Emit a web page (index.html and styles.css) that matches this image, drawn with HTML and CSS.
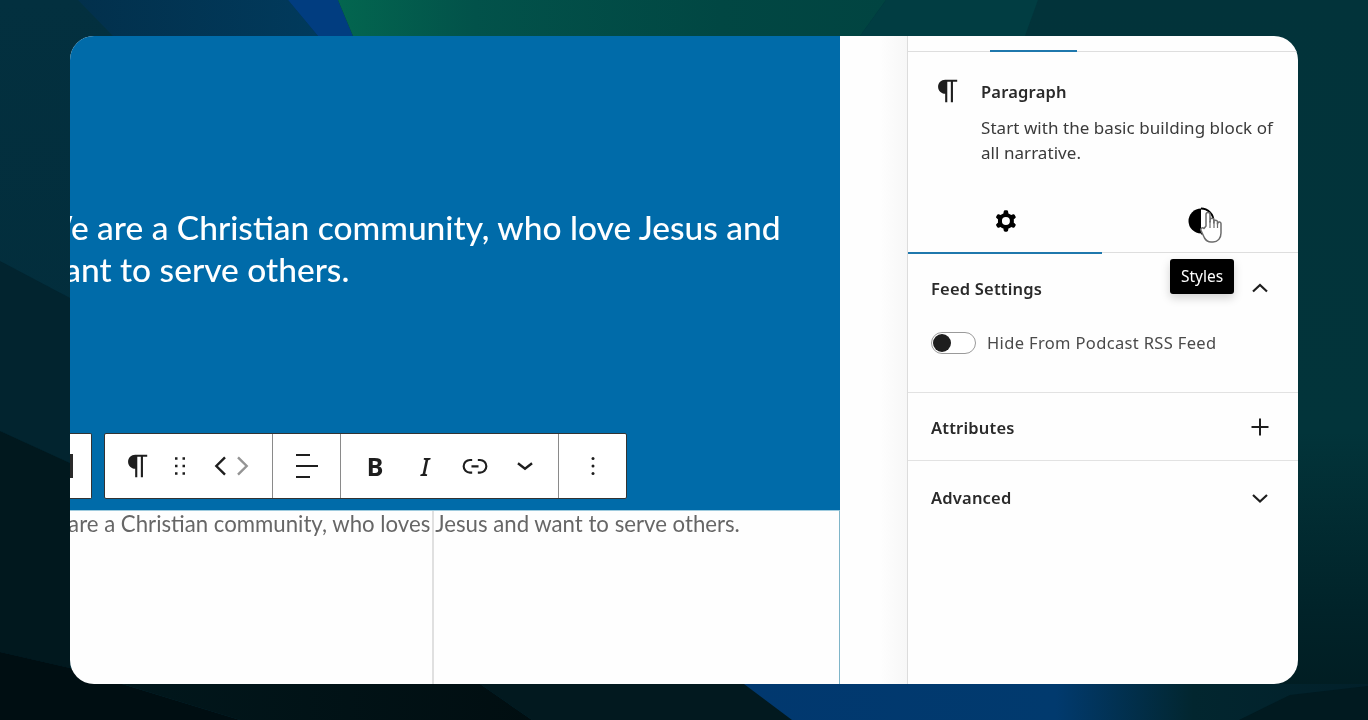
FILE: index.html
```html
<!DOCTYPE html>
<html lang="en">
<head>
<meta charset="utf-8">
<title>Paragraph block settings</title>
<link rel="stylesheet" href="styles.css">
</head>
<body>
<svg class="backdrop" viewBox="0 0 1368 720" preserveAspectRatio="none" aria-hidden="true">
  <defs>
    <linearGradient id="base" x1="0" y1="0" x2="0" y2="1">
      <stop offset="0" stop-color="#03303f"/><stop offset="1" stop-color="#022b39"/>
    </linearGradient>
    <linearGradient id="right" x1="0" y1="0" x2="0" y2="1">
      <stop offset="0" stop-color="#02333a"/><stop offset=".6" stop-color="#02343a"/><stop offset=".85" stop-color="#012329"/><stop offset="1" stop-color="#011b20"/>
    </linearGradient>
    <linearGradient id="green" x1="0" y1="0" x2="1" y2="0">
      <stop offset="0" stop-color="#03664f"/><stop offset=".25" stop-color="#02524a"/><stop offset=".7" stop-color="#014743"/><stop offset="1" stop-color="#014441"/>
    </linearGradient>
    <linearGradient id="navy" x1="0" y1="0" x2="1" y2="0">
      <stop offset="0" stop-color="#02304c"/><stop offset="1" stop-color="#013a5c"/>
    </linearGradient>
    <linearGradient id="deep" x1="0" y1="0" x2="1" y2="0">
      <stop offset="0" stop-color="#01386f"/><stop offset=".5" stop-color="#013a6e"/><stop offset=".72" stop-color="#02262f"/><stop offset="1" stop-color="#02202a"/>
    </linearGradient>
    <linearGradient id="dusk" x1="0" y1="0" x2="1" y2="0">
      <stop offset="0" stop-color="#01171c"/><stop offset="1" stop-color="#010e11"/>
    </linearGradient>
  </defs>
  <rect width="1368" height="720" fill="url(#base)"/>
  <rect x="684" width="684" height="720" fill="url(#right)"/>
  <polygon points="78,0 288,0 318,36 113,36" fill="url(#navy)"/>
  <polygon points="288,0 338,0 353,36 318,36" fill="#013d80"/>
  <polygon points="338,0 886,0 860,36 353,36" fill="url(#green)"/>
  <polygon points="886,0 1038,0 1025,36 860,36" fill="#013d42"/>
  <polygon points="0,261 70,298 70,463 0,431" fill="#02242f"/>
  <polygon points="0,431 70,463 70,668 0,652" fill="#01181e"/>
  <polygon points="0,652 70,668 122,684 240,720 0,720" fill="#000e12"/>
  <polygon points="122,684 480,684 532,720 240,720" fill="url(#dusk)"/>
  <polygon points="480,684 744,684 792,720 532,720" fill="#02191f"/>
  <polygon points="744,684 1368,684 1368,720 792,720" fill="url(#deep)"/>
  <polygon points="1239,720 1290,695 1368,686 1368,720" fill="#011a20"/>
</svg>

<main class="window">
  <section class="canvas">
    <div class="hero">
      <p class="hero-text">We are a Christian community, who love Jesus and want to serve others.</p>
      <div class="toolbars">
        <div class="toolbar toolbar-cut"><span class="cut-icon"></span></div>
        <div class="toolbar">
          <div class="group group-block">
            <button class="tool tool-wide"><svg viewBox="0 0 24 24" class="icon icon-xl"><path d="m9.99609 14v-.2251l.00391.0001v6.225h1.5v-14.5h2.5v14.5h1.5v-14.5h3v-1.5h-8.50391c-2.76142 0-5 2.23858-5 5 0 2.7614 2.23858 5 5 5z"/></svg></button>
            <button class="tool tool-drag"><svg viewBox="0 0 24 24" class="icon icon-drag"><path d="M8 7h2V5H8v2zm0 6h2v-2H8v2zm0 6h2v-2H8v2zm6-14v2h2V5h-2zm0 8h2v-2h-2v2zm0 6h2v-2h-2v2z"/></svg></button>
            <button class="tool tool-move"><svg viewBox="0 0 24 24" class="icon icon-move"><path d="M15 5.500 8.500 12l6.500 6.500" class="line line-move"/></svg></button>
            <button class="tool tool-move tool-off"><svg viewBox="0 0 24 24" class="icon icon-move"><path d="M9 5.500 15.500 12 9 18.500" class="line line-move"/></svg></button>
          </div>
          <div class="group group-align">
            <button class="tool tool-wide"><svg viewBox="0 0 24 24" class="icon"><path d="M1 0h14v2H1zM1 11h22v2H1zM1 22h14v2H1z"/></svg></button>
          </div>
          <div class="group group-format">
            <button class="tool tool-wide tool-letter tool-bold">B</button>
            <button class="tool tool-wide tool-letter tool-italic">I</button>
            <button class="tool tool-wide"><svg viewBox="0 0 24 24" class="icon icon-xl"><path d="M10 17.389H8.444A5.194 5.194 0 1 1 8.444 7H10v1.500H8.444a3.694 3.694 0 0 0 0 7.389H10v1.500ZM14 7h1.556a5.194 5.194 0 0 1 0 10.390H14v-1.500h1.556a3.694 3.694 0 0 0 0-7.390H14V7Zm-4.500 6h5v-1.500h-5V13Z"/></svg></button>
            <button class="tool tool-wide"><svg viewBox="0 0 24 24" class="icon icon-chev"><path d="M5.500 9.500 12 14.500l6.500-5" class="line"/></svg></button>
          </div>
          <div class="group group-more">
            <button class="tool tool-wide"><svg viewBox="0 0 24 24" class="icon"><circle cx="12" cy="4.500" r="1.500"/><circle cx="12" cy="12" r="1.500"/><circle cx="12" cy="19.500" r="1.500"/></svg></button>
          </div>
        </div>
      </div>
    </div>
    <div class="columns">
      <div class="col col-left"></div>
      <div class="col col-right"></div>
      <p class="copy">We are a Christian community, who loves Jesus and want to serve others.</p>
    </div>
  </section>

  <div class="gutter"></div>

  <aside class="sidebar">
    <div class="doc-tabs"><span class="doc-tab-mark"></span></div>
    <div class="block-card">
      <svg viewBox="0 0 24 24" class="card-icon"><path d="m9.99609 14v-.2251l.00391.0001v6.225h1.5v-14.5h2.5v14.5h1.5v-14.5h3v-1.5h-8.50391c-2.76142 0-5 2.23858-5 5 0 2.7614 2.23858 5 5 5z"/></svg>
      <div class="card-body">
        <h2 class="card-title">Paragraph</h2>
        <p class="card-desc">Start with the basic building block of all narrative.</p>
      </div>
    </div>
    <div class="inspector-tabs">
      <button class="itab itab-active"><svg viewBox="0 0 24 24" class="itab-icon"><path fill-rule="evenodd" clip-rule="evenodd" d="M10.289 4.836A1 1 0 0111.275 4h1.306a1 1 0 01.987.836l.244 1.466c.787.26 1.503.679 2.108 1.218l1.393-.522a1 1 0 011.216.437l.653 1.13a1 1 0 01-.23 1.273l-1.148.944a6.025 6.025 0 010 2.435l1.149.946a1 1 0 01.23 1.272l-.653 1.13a1 1 0 01-1.216.437l-1.394-.522c-.605.54-1.32.958-2.108 1.218l-.244 1.466a1 1 0 01-.987.836h-1.306a1 1 0 01-.986-.836l-.244-1.466a5.995 5.995 0 01-2.108-1.218l-1.394.522a1 1 0 01-1.217-.436l-.653-1.131a1 1 0 01.23-1.272l1.149-.946a6.026 6.026 0 010-2.435l-1.148-.944a1 1 0 01-.23-1.272l.653-1.131a1 1 0 011.217-.437l1.393.522a5.994 5.994 0 012.108-1.218l.244-1.466zM14.929 12a3 3 0 11-6 0 3 3 0 016 0z"/></svg></button>
      <button class="itab itab-styles"><svg viewBox="0 0 24 24" class="itab-icon itab-icon-styles"><path d="M12 2a10 10 0 1 0 0 20V2Z"/><path d="M12 2a10 10 0 0 1 0 20" class="half"/></svg></button>
    </div>
    <section class="panel panel-open">
      <header class="panel-head panel-head-feed">
        <h3 class="panel-title">Feed Settings</h3>
        <svg viewBox="0 0 24 24" class="chev chev-up"><path d="M5 15.500 12 9l7 6.500" class="line"/></svg>
      </header>
      <div class="toggle-row">
        <span class="toggle"><span class="knob"></span></span>
        <span class="toggle-label">Hide From Podcast RSS Feed</span>
      </div>
    </section>
    <section class="panel panel-attrs">
      <header class="panel-head">
        <h3 class="panel-title panel-title-low">Attributes</h3>
        <svg viewBox="0 0 24 24" class="chev"><path d="M12 3.500v17M3.500 12h17" class="line line-thin"/></svg>
      </header>
    </section>
    <section class="panel panel-adv">
      <header class="panel-head">
        <h3 class="panel-title">Advanced</h3>
        <svg viewBox="0 0 24 24" class="chev"><path d="M5 9l7 6.500L19 9" class="line"/></svg>
      </header>
    </section>
    <div class="tooltip">Styles</div>
    <svg class="hand" viewBox="0 0 26 36"><path d="M7 17V5.500a2 2 0 0 1 4 0V13l.2-2a1.800 1.800 0 0 1 3.600.2V14l.2-1.600a1.800 1.800 0 0 1 3.500.3V15l.3-1a1.700 1.700 0 0 1 3.200.6V24c0 5-3 9-8 9h-2c-3 0-5-1.500-6.500-4L2 21.500c-1-2 1.500-3.500 3-2Z" fill="#fff" stroke="#6c6c6c" stroke-width="1.500" stroke-linejoin="round"/><path d="M11 12v7M15 13v6M18.500 14v5" stroke="#6c6c6c" stroke-width="1.200" fill="none"/></svg>
  </aside>
</main>
</body>
</html>
```

FILE: styles.css
```css
* { box-sizing: border-box; }
html, body { height: 100%; }
body {
  margin: 0;
  padding: 36px 70px;
  background: #021a20;
  overflow: hidden;
  font-family: "Noto Sans", "Open Sans", sans-serif;
}
.backdrop { position: fixed; inset: 0; width: 100%; height: 100%; z-index: -1; }

.window {
  display: flex;
  width: 1228px;
  height: 648px;
  border-radius: 24px;
  overflow: hidden;
  background: #fefefe;
}

/* Canvas */
.canvas {
  display: flex;
  flex-direction: column;
  width: 770px;
  flex: none;
  overflow: hidden;
}
.hero {
  display: flex;
  flex-direction: column;
  height: 474px;
  background: #006ba9;
  flex: none;
}
.hero-text {
  margin: 170px 0 0 -32px;
  width: 800px;
  font-family: Lato, "Open Sans", sans-serif;
  font-size: 33.500px;
  font-weight: 500;
  line-height: 42px;
  color: #fff;
}
.toolbars {
  display: flex;
  gap: 12px;
  margin-top: auto;
  margin-bottom: 11px;
}
.toolbar {
  display: flex;
  height: 66px;
  background: #fff;
  border: 1px solid #333;
  border-radius: 2px;
  flex: none;
}
.toolbar-cut {
  width: 22px;
  border-left: 0;
  border-radius: 0 2px 2px 0;
  align-items: center;
}
.cut-icon { width: 3px; height: 24px; background: #2a2a2a; }
.group {
  display: flex;
  align-items: center;
  border-right: 1px solid #8a8a8a;
}
.group:last-child { border-right: 0; }
.group-block { width: 168px; padding-left: 8px; }
.group-align { width: 68px; justify-content: center; }
.group-format { width: 218px; padding-left: 9px; }
.group-more { width: 67px; justify-content: center; }
.tool {
  display: flex;
  align-items: center;
  justify-content: center;
  padding: 0;
  border: 0;
  background: none;
  color: #1e1e1e;
  height: 44px;
}
.tool-wide { width: 50px; }
.tool-drag { width: 34px; margin-right: 13px; }
.tool-move { width: 21px; }
.tool-off { color: #949494; }
.tool-letter { font-size: 25px; line-height: 1; }
.tool-bold { font-weight: 700; font-family: "Noto Sans", sans-serif; }
.tool-italic { font-style: italic; font-weight: 500; font-family: "Noto Sans", sans-serif; }
.icon { width: 24px; height: 24px; fill: currentColor; flex: none; }
.icon-xl { width: 34px; height: 34px; }
.icon-drag { width: 30px; height: 30px; }
.icon-move { width: 32px; height: 32px; }
.icon-chev { width: 26px; height: 26px; }
.line { fill: none; stroke: currentColor; stroke-width: 2.2; }
.line-move { stroke-width: 1.800; }
.line-thin { stroke-width: 2; }

.columns {
  position: relative;
  display: flex;
  flex: 1;
  border-top: 1px solid #9fcbde;
  border-right: 1px solid #7fb5c8;
}
.col-left { width: 364px; border-right: 2px solid #e0e0e0; flex: none; }
.col-right { flex: 1; }
.copy {
  position: absolute;
  left: -41px;
  top: -1px;
  margin: 0;
  white-space: nowrap;
  font-family: Lato, "Open Sans", sans-serif;
  font-size: 22.200px;
  line-height: 28px;
  color: #666;
}

.gutter {
  width: 67px;
  flex: none;
  background: linear-gradient(90deg, #fefefe 60%, #f7f7f7 100%);
  border-right: 1px solid #dcdcdc;
  box-sizing: content-box;
}

/* Sidebar */
.sidebar {
  position: relative;
  flex: 1;
  display: flex;
  flex-direction: column;
  color: #1e1e1e;
}
.doc-tabs {
  display: flex;
  align-items: flex-end;
  height: 16px;
  border-bottom: 1px solid #dedede;
  flex: none;
}
.doc-tab-mark { width: 87px; height: 2px; margin: 0 0 -1px 82px; background: #1f78ad; }
.block-card { display: flex; flex: none; height: 153px; padding: 22px 0 0 23px; }
.card-icon { width: 34px; height: 34px; fill: #1e1e1e; flex: none; }
.card-body { margin-left: 16px; width: 296px; }
.card-title { margin: 6px 0 0; font-size: 16.500px; letter-spacing: .2px; line-height: 24px; font-weight: 600; color: #2a2a2a; }
.card-desc { margin: 11px 0 0; font-size: 17px; letter-spacing: .05px; line-height: 25px; color: #3a3a3a; }
.inspector-tabs { display: flex; height: 48px; border-bottom: 1px solid #dedede; flex: none; }
.itab {
  display: flex;
  justify-content: center;
  padding: 0;
  border: 0;
  background: none;
  width: 194px;
  height: 49px;
  align-items: flex-start;
}
.itab-styles { width: 196px; padding: 1px 0 0 1px; }
.itab-active { border-bottom: 2px solid #1f78ad; padding-left: 2px; }
.itab-icon { width: 32px; height: 32px; fill: #000; }
.itab-icon-styles { width: 30px; height: 30px; }
.half { fill: #fff; stroke: #000; stroke-width: 1.5; }

.panel { border-bottom: 1px solid #e2e2e2; flex: none; }
.panel-open { height: 140px; }
.panel-attrs { height: 68px; }
.panel-adv { border-bottom: 0; }
.panel-head {
  display: flex;
  align-items: center;
  justify-content: space-between;
  padding: 0 26px 0 23px;
  height: 68px;
}
.panel-head-feed { height: 72px; }
.panel-adv .panel-head { height: 74px; }
.panel-title { margin: 0; font-size: 16.500px; letter-spacing: .2px; line-height: 24px; font-weight: 600; color: #2a2a2a; }
.panel-title-low { padding-top: 2px; }
.chev { width: 24px; height: 24px; color: #1e1e1e; flex: none; }
.chev-up { margin-top: -2px; }
.toggle-row { display: flex; align-items: center; gap: 11px; padding: 0 0 0 23px; margin-top: 6px; }
.toggle {
  display: flex;
  align-items: center;
  width: 45px;
  height: 22px;
  padding-left: 1px;
  border: 1px solid #9a9a9a;
  border-radius: 11px;
  background: #fff;
}
.knob { width: 18px; height: 18px; border-radius: 50%; background: #1e1e1e; }
.toggle-label { font-size: 16.500px; letter-spacing: .35px; line-height: 24px; color: #4a4a4a; }

.tooltip {
  position: absolute;
  left: 262px;
  top: 223px;
  width: 64px;
  height: 35px;
  border-radius: 3px;
  background: #000;
  color: #fff;
  font-size: 15.500px;
  line-height: 35px;
  text-align: center;
  box-shadow: 0 4px 10px rgba(0,0,0,.18);
}
.hand {
  position: absolute;
  left: 291px;
  top: 173px;
  width: 26px;
  height: 36px;
}
```
